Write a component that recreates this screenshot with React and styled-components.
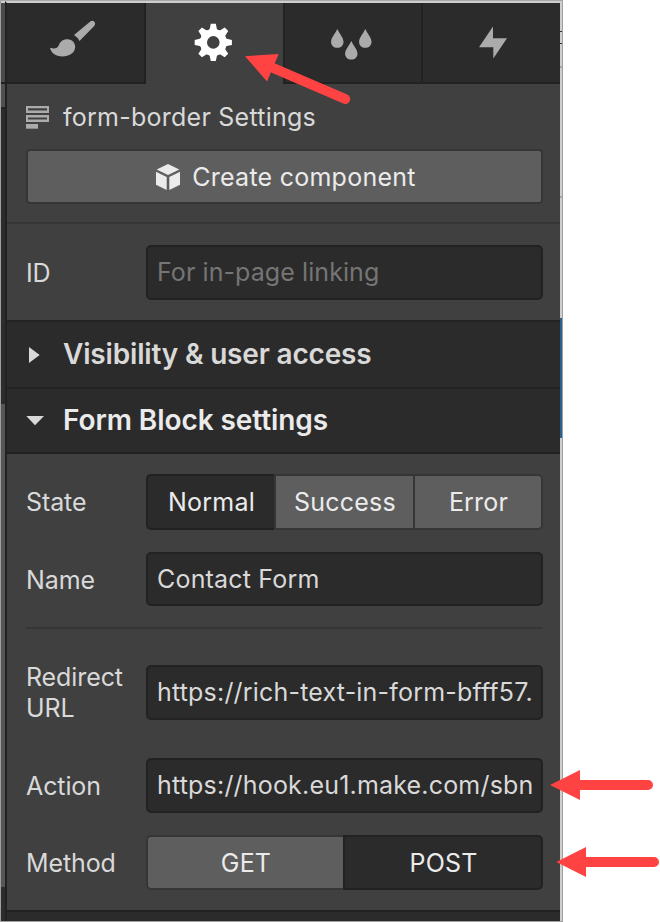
import React, { useState } from 'react'
import styled, { createGlobalStyle, css } from 'styled-components'

const EDGE = '#222222'
const PANEL = '#404040'
const DARK = '#2b2b2b'
const BUTTON = '#5e5e5e'
const BUTTON_EDGE = '#363636'
const ICON = '#ababab'
const RED = '#ff4343'

const GlobalStyle = createGlobalStyle`
  * {
    box-sizing: border-box;
  }
  body {
    margin: 0;
    background: #ffffff;
    overflow: hidden;
    font-family: Inter, "Liberation Sans", sans-serif;
    font-size: 25px;
    letter-spacing: 0.25px;
    color: #d9d9d9;
  }
`;

const Page = styled.div`
  position: relative;
  width: 660px;
  height: 922px;
`;

const Frame = styled.div`
  display: flex;
  width: 563px;
  height: 922px;
  border: 1px solid #a0a0a0;
  border-top-color: #a8a8a8;
`;

const Gutter = styled.div`
  display: flex;
  flex-direction: column;
  width: 4px;
  border-top: 2px solid #d0cdcd;
`;

const Slice = styled.div`
  height: ${p => p.height}px;
  background: ${p => p.color};
`;

const Panel = styled.div`
  width: 555px;
  border-top: 2px solid #d0cdcd;
  border-left: 2px solid ${EDGE};
  background: ${PANEL};
`;

const RightEdge = styled(Gutter)`
  width: 2px;
`;

const Tabs = styled.div`
  display: flex;
  height: 81px;
`;

const Tab = styled.button`
  display: flex;
  align-items: center;
  justify-content: center;
  width: ${p => p.width}px;
  padding: 0;
  border: 0 solid ${EDGE};
  background: ${DARK};
  border-bottom-width: 2px;
  ${p => p.divider === 'right' && css`border-right-width: 2px;`}
  ${p => p.divider === 'left' && css`border-left-width: 2px;`}
  ${p => p.active && css`
    background: ${PANEL};
    border-bottom-width: 0;
  `}

  svg {
    display: block;
    overflow: visible;
  }
`;

const Intro = styled.div`
  height: 140px;
  padding: 14px 17px 0 19px;
  border-bottom: 2px solid #363636;
`;

const Title = styled.div`
  display: flex;
  align-items: center;
  height: 38px;
  gap: 14px;
`;

const CreateButton = styled.button`
  display: flex;
  align-items: center;
  justify-content: center;
  gap: 12px;
  width: 100%;
  height: 55px;
  margin-top: 13px;
  padding: 0 5px 0 8px;
  border: 2px solid ${BUTTON_EDGE};
  border-radius: 4px;
  background: ${BUTTON};
  color: #ebebeb;
  font: inherit;
  letter-spacing: inherit;
`;

const Group = styled.div`
  padding: ${p => p.top}px 17px 0 19px;
  height: ${p => p.height}px;
`;

const Row = styled.div`
  display: flex;
  align-items: center;
  height: ${p => p.height || 55}px;
  margin-bottom: ${p => p.gap || 0}px;
`;

const Label = styled.label`
  width: 120px;
  flex: none;
  padding-top: ${p => p.drop || 0}px;
  line-height: 31px;
  letter-spacing: -0.1px;
`;

const Input = styled.input`
  flex: 1;
  min-width: 0;
  height: 100%;
  padding: 0 8px 1px 9px;
  border: 2px solid ${EDGE};
  border-radius: 5px;
  outline: none;
  background: ${DARK};
  color: #d9d9d9;
  font: inherit;
  letter-spacing: 0.19px;

  &::placeholder {
    color: #757575;
    opacity: 1;
    letter-spacing: 0.08px;
  }
`;

const Divider = styled.div`
  height: 2px;
  margin-bottom: 36px;
  background: #363636;
`;

const Segments = styled.div`
  display: flex;
  flex: 1;
  height: 100%;
`;

const Segment = styled.button`
  width: ${p => p.width}px;
  padding: ${p => p.drop || 0}px 0 0 1px;
  border: 2px solid ${p => p.active ? EDGE : BUTTON_EDGE};
  background: ${p => p.active ? DARK : BUTTON};
  color: #ebebeb;
  font: inherit;
  letter-spacing: 0.2px;

  &:first-child {
    border-right-width: 0;
    border-radius: 5px 0 0 5px;
  }
  &:last-child {
    border-radius: 0 5px 5px 0;
  }
  &:nth-child(2):not(:last-child) {
    border-right-width: 0;
  }
`;

const SectionHeader = styled.div`
  display: flex;
  align-items: center;
  height: ${p => p.height}px;
  padding: 0 0 2px 19px;
  border-top: 2px solid ${EDGE};
  background: ${DARK};
  color: ${p => p.open ? '#ebebeb' : '#d9d9d9'};
  font-size: 28px;
  font-weight: 600;
  letter-spacing: ${p => p.open ? -0.08 : -0.18}px;

  svg {
    margin-right: 18px;
  }
`;

const NextSection = styled.div`
  height: 11px;
  border-top: 2px solid ${EDGE};
  background: ${DARK};
`;

const Arrows = styled.svg`
  position: absolute;
  top: 0;
  left: 0;
  pointer-events: none;
`;

const BrushIcon = () => (
  <svg width="46" height="37" viewBox="53 24.5 46 37" fill={ICON}>
    <path d="M74 35.5 90 22.2Q92.5 20.3 94.3 22.2Q96 24 94.2 26.5L79.5 41.5Q78 38 74 35.5Z" />
    <path d="M50 48.3Q56.5 50.5 58.7 46C60 42.5 62.5 39.8 67.5 39.8C72.5 40 75.3 43.5 75.2 47.8C74.8 53.6 69 57 62.5 57C55.5 57 51 53.5 50 48.3Z" />
  </svg>
)

const GearIcon = () => (
  <svg width="38" height="38" viewBox="-17.3 -17.4 38 38" fill="#ffffff">
    <circle r="9.8" fill="none" stroke="#ffffff" strokeWidth="7" />
    {[0, 45, 90, 135, 180, 225, 270, 315].map(angle => (
      <path key={angle} transform={`rotate(${angle})`} d="M-2.5-18.6H2.5L3.6-13.5 5.5-11.5H-5.5L-3.6-13.5Z" />
    ))}
  </svg>
)

const DROP = 'M0 0C1.8 4.2 6.2 8.6 6.2 12.8C6.2 16.2 3.6 18.7 0 18.7S-6.2 16.2-6.2 12.8C-6.2 8.6-1.8 4.2 0 0Z'

const DropsIcon = () => (
  <svg width="41" height="32" viewBox="333.5 26.5 41 32" fill={ICON}>
    <path transform="translate(337.8 28.6)" d={DROP} />
    <path transform="translate(351.8 40.4)" d={DROP} />
    <path transform="translate(365.8 28.6)" d={DROP} />
  </svg>
)

const BoltIcon = () => (
  <svg width="28" height="32" viewBox="478 26.5 28 32" fill={ICON}>
    <path d="M493 26V37.7H507L493.3 58V46.7H479Z" />
  </svg>
)

const FormIcon = () => (
  <svg width="23" height="23" viewBox="0 0 23 23" fill={ICON}>
    <path fillRule="evenodd" d="M0 0H23V7H0ZM2 2.3V4.5H21V2.3ZM0 9H23V16H0ZM2 11.4V13.6H21V11.4Z" />
    <path d="M0 18H12V22.7H0Z" />
  </svg>
)

const CubeIcon = () => (
  <svg width="24" height="26" viewBox="156 163.3 24 26" fill="#ebebeb">
    <path d="M168 163.3 179.3 168.7 168 174.3 156.7 168.7Z" />
    <path d="M156 171 166.7 176.3V189.2L156 184Z" />
    <path d="M169.3 176.3 180 171V184L169.3 189.2Z" />
  </svg>
)

const Caret = ({ open }) => (
  <svg width="19" height="18" viewBox="0 0 19 18" fill="#d9d9d9">
    <path d={open ? 'M.3 5H18L9 14.3Z' : 'M3 2 13.7 10 3 18Z'} />
  </svg>
)

const Options = ({ options, value, onChange, drop }) => (
  <Segments>
    {options.map(([name, width]) => (
      <Segment key={name} width={width} drop={drop} active={name === value} onClick={() => onChange(name)}>
        {name}
      </Segment>
    ))}
  </Segments>
)

const Field = ({ label, gap, height, drop, ...input }) => (
  <Row gap={gap} height={height}>
    <Label drop={drop}>{label}</Label>
    <Input {...input} />
  </Row>
)

export default function App() {
  const [state, setState] = useState('Normal')
  const [method, setMethod] = useState('POST')

  return (
    <Page>
      <GlobalStyle />
      <Frame>
        <Gutter>
          <Slice height={79} color="#4a4a4a" />
          <Slice height={2} color={EDGE} />
          <Slice height={23} color="#505050" />
          <Slice height={2} color={EDGE} />
          <Slice height={295} color="#2b2d2d" />
          <Slice height={483} color="#565656" />
          <Slice height={34} color="#2b2d2d" />
        </Gutter>

        <Panel>
          <Tabs>
            <Tab width={139} divider="right"><BrushIcon /></Tab>
            <Tab width={137} active><GearIcon /></Tab>
            <Tab width={138} divider="left"><DropsIcon /></Tab>
            <Tab width={139} divider="left"><BoltIcon /></Tab>
          </Tabs>

          <Intro>
            <Title>
              <FormIcon />
              form-border Settings
            </Title>
            <CreateButton>
              <CubeIcon />
              Create component
            </CreateButton>
          </Intro>

          <Group top={21} height={96}>
            <Field label="ID" drop={2} placeholder="For in-page linking" />
          </Group>

          <SectionHeader height={67}>
            <Caret />
            Visibility &amp; user access
          </SectionHeader>
          <SectionHeader height={65} open>
            <Caret open />
            Form Block settings
          </SectionHeader>
          <Slice height={2} color={EDGE} />

          <Group top={20} height={456}>
            <Row height={56} gap={22}>
              <Label>State</Label>
              <Options
                options={[['Normal', 128], ['Success', 139], ['Error', 130]]}
                value={state}
                onChange={setState}
              />
            </Row>
            <Field label="Name" drop={2} height={54} gap={21} defaultValue="Contact Form" />
            <Divider />
            <Field label="Redirect URL" gap={38} defaultValue="https://rich-text-in-form-bfff57.webflow.io" />
            <Field label="Action" drop={2} gap={22} defaultValue="https://hook.eu1.make.com/sbn" />
            <Row>
              <Label drop={2}>Method</Label>
              <Options
                drop={1}
                options={[['GET', 197], ['POST', 200]]}
                value={method}
                onChange={setMethod}
              />
            </Row>
          </Group>
          <NextSection />
        </Panel>

        <RightEdge>
          <Slice height={28} color="#d0cdcd" />
          <Slice height={1} color="#333333" />
          <Slice height={11} color="#d0cdcd" />
          <Slice height={1} color="#333333" />
          <Slice height={22} color="#d0cdcd" />
          <Slice height={2} color="#a8a6a6" />
          <Slice height={128} color="#d0cdcd" />
          <Slice height={2} color="#a8a6a6" />
          <Slice height={120} color="#d0cdcd" />
          <Slice height={120} color="#2a608e" />
          <Slice height={483} color="#d0cdcd" />
        </RightEdge>
      </Frame>

      <Arrows width="660" height="922" fill={RED} stroke={RED}>
        <path stroke="none" d="M245 56.2 278.7 54 267 81.5ZM550 785 580 770V800ZM556.3 862 586 847V877Z" />
        <path fill="none" strokeWidth="10" strokeLinecap="round" d="M272 67.5 345.2 99M576 785H648M582 862H654" />
      </Arrows>
    </Page>
  )
}
